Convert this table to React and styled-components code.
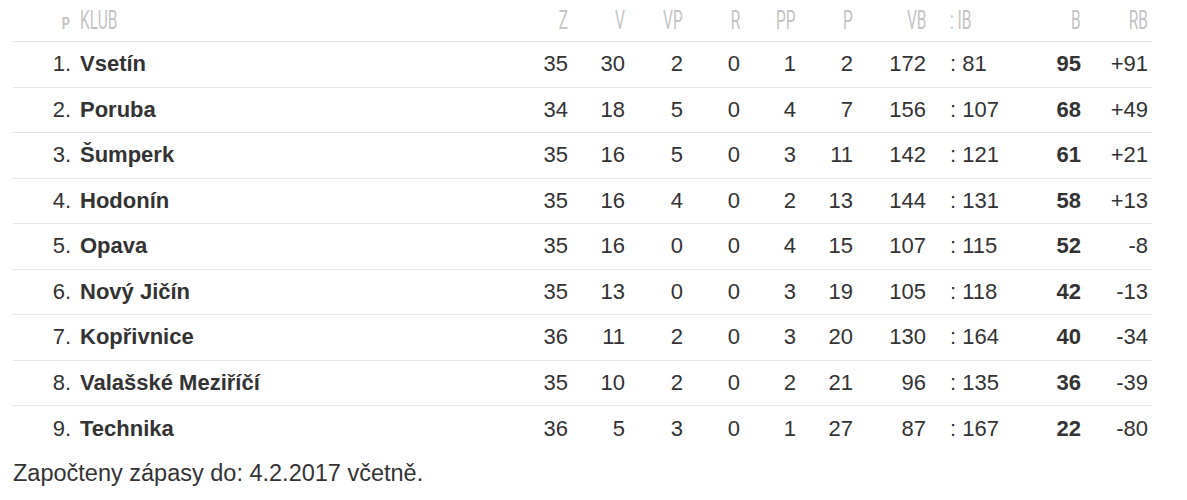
import React from "react";
import styled, { createGlobalStyle } from "styled-components";

const GlobalStyle = createGlobalStyle`
  body {
    margin: 0;
    background: #fff;
    font-family: "Liberation Sans", Arial, sans-serif;
    color: #333;
  }
`;

const Wrapper = styled.div`
  padding: 0 35px 0 13px;
`;

const COLS = "58px 459px 38px 57px 58px 57px 56px 57px 73px 114px 41px 67px";

const HeadRow = styled.div`
  display: grid;
  grid-template-columns: ${COLS};
  padding-right: 4px;
  height: 42px;
  padding-bottom: 1px;
  align-items: center;
  border-bottom: 1px solid #e4e4e4;
  box-sizing: border-box;
  font-family: Roboto, sans-serif;
  font-weight: 300;
  font-size: 25px;
  color: #c4c4c4;
`;

const HeadText = styled.span`
  display: inline-block;
  transform: scaleX(0.62);
  transform-origin: ${props => (props.left ? "left" : "right")} center;
`;

const Row = styled.div`
  display: grid;
  grid-template-columns: ${COLS};
  padding-right: 4px;
  height: 45.5px;
  align-items: center;
  border-bottom: ${props => (props.last ? "none" : "1px solid #e4e4e4")};
  box-sizing: border-box;
  font-size: 22px;
  color: #333;
`;

const Cell = styled.div`
  text-align: ${props => props.align || "right"};
  padding-left: ${props => props.pl || "0"};
  font-weight: ${props => (props.bold ? "bold" : "normal")};
  white-space: nowrap;
`;

const SmallP = styled.span`
  display: inline-block;
  font-size: 17px;
  font-weight: 700;
  transform: scaleX(0.75);
  transform-origin: right center;
  margin-right: 1px;
`;

const Footer = styled.p`
  margin: 0;
  padding-top: 8px;
  font-size: 23.5px;
  color: #333;
`;

const data = [
  ["Vsetín", 35, 30, 2, 0, 1, 2, 172, 81, 95, "+91"],
  ["Poruba", 34, 18, 5, 0, 4, 7, 156, 107, 68, "+49"],
  ["Šumperk", 35, 16, 5, 0, 3, 11, 142, 121, 61, "+21"],
  ["Hodonín", 35, 16, 4, 0, 2, 13, 144, 131, 58, "+13"],
  ["Opava", 35, 16, 0, 0, 4, 15, 107, 115, 52, "-8"],
  ["Nový Jičín", 35, 13, 0, 0, 3, 19, 105, 118, 42, "-13"],
  ["Kopřivnice", 36, 11, 2, 0, 3, 20, 130, 164, 40, "-34"],
  ["Valašské Meziříčí", 35, 10, 2, 0, 2, 21, 96, 135, 36, "-39"],
  ["Technika", 36, 5, 3, 0, 1, 27, 87, 167, 22, "-80"],
];

const heads = ["Z", "V", "VP", "R", "PP", "P", "VB"];

export default function App() {
  return (
    <Wrapper>
      <GlobalStyle />
      <HeadRow>
        <Cell><SmallP>P</SmallP></Cell>
        <Cell align="left" pl="9px"><HeadText left>KLUB</HeadText></Cell>
        {heads.map(h => (
          <Cell key={h}><HeadText>{h}</HeadText></Cell>
        ))}
        <Cell align="left" pl="24px"><HeadText left>: IB</HeadText></Cell>
        <Cell><HeadText>B</HeadText></Cell>
        <Cell><HeadText>RB</HeadText></Cell>
      </HeadRow>
      {data.map((r, i) => (
        <Row key={r[0]} last={i === data.length - 1}>
          <Cell>{i + 1}.</Cell>
          <Cell align="left" pl="9px" bold>{r[0]}</Cell>
          <Cell>{r[1]}</Cell>
          <Cell>{r[2]}</Cell>
          <Cell>{r[3]}</Cell>
          <Cell>{r[4]}</Cell>
          <Cell>{r[5]}</Cell>
          <Cell>{r[6]}</Cell>
          <Cell>{r[7]}</Cell>
          <Cell align="left" pl="24px">: {r[8]}</Cell>
          <Cell bold>{r[9]}</Cell>
          <Cell>{r[10]}</Cell>
        </Row>
      ))}
      <Footer>Započteny zápasy do: 4.2.2017 včetně.</Footer>
    </Wrapper>
  );
}
